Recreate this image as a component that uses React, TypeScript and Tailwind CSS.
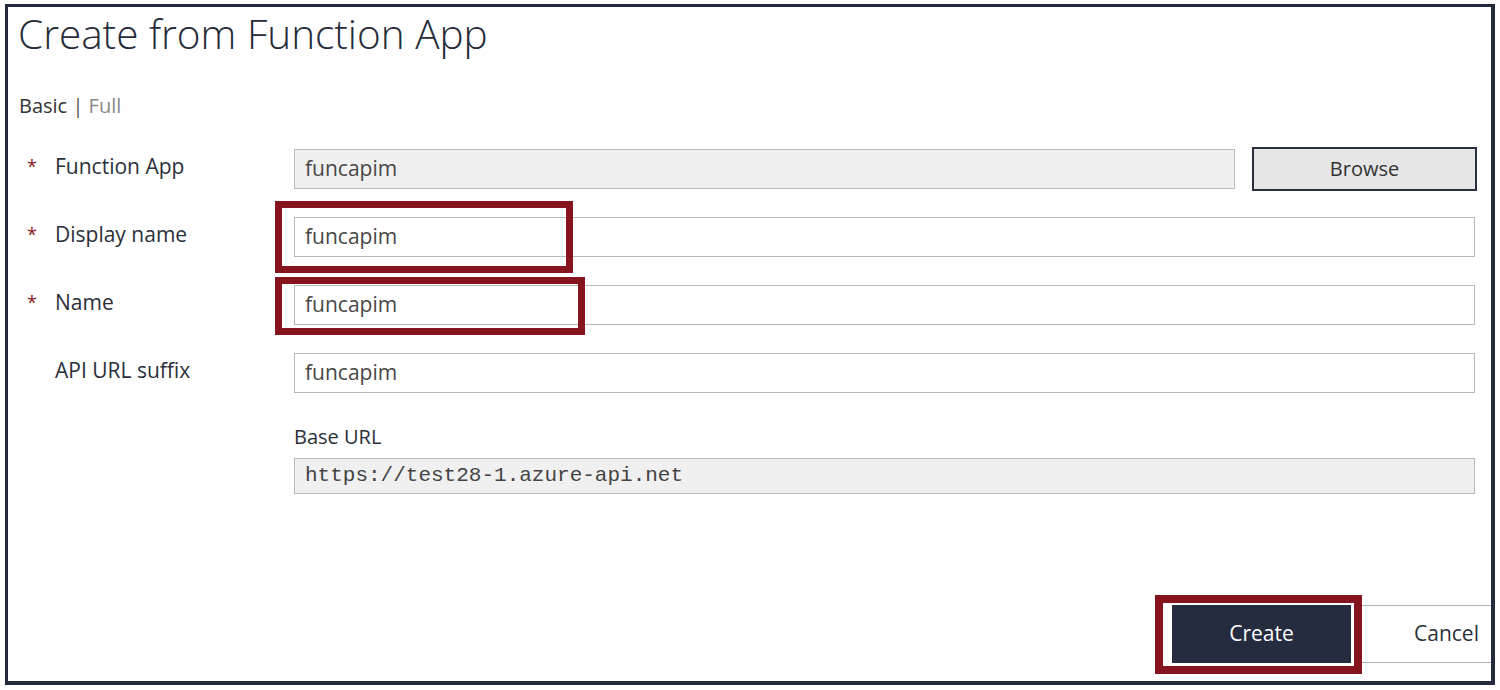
const font = { fontFamily: '"Open Sans", "Noto Sans", sans-serif' };

function Star({ show }: { show: boolean }) {
  return (
    <span className="inline-block w-[47px] shrink-0 pl-[19px] text-[18px] text-[#8a1620]">{show ? '*' : ''}</span>
  );
}

function RedBox({ className }: { className: string }) {
  return <div className={`pointer-events-none absolute border-[#85141f] ${className}`} />;
}

function Row({
  label,
  required,
  children,
}: {
  label: string;
  required?: boolean;
  children: React.ReactNode;
}) {
  return (
    <div className="flex items-start">
      <div className="flex w-[286px] shrink-0 items-center pt-[2px] text-[21px] leading-[30px] text-[#2b2f3a]">
        <Star show={!!required} />
        <span>{label}</span>
      </div>
      {children}
    </div>
  );
}

function TextBox({ value, className = '' }: { value: string; className?: string }) {
  return (
    <div
      className={`flex h-[40px] items-center border border-[#b9b9b9] pl-[10px] text-[21px] text-[#474747] ${className}`}
    >
      {value}
    </div>
  );
}

export default function App() {
  return (
    <div className="bg-white" style={font}>
      <div className="ml-[5px] mt-[4px] flex h-[681px] w-[1490px] flex-col border-t-[3px] border-l-[3px] border-r-4 border-b-4 border-[#232a3d] bg-white">
        <h1 className="pl-[10px] pt-[1px] text-[40.5px] font-light leading-[52px] text-[#262b38]">
          Create from Function App
        </h1>
        <div className="mt-[33px] pl-[11px] text-[20px] leading-[26px] text-[#333]">
          Basic <span className="text-[#555]">|</span> <span className="text-[#8a8a8a]">Full</span>
        </div>

        <div className="mt-[30px] flex flex-col gap-[28px]">
          <Row label="Function App" required>
            <div className="flex h-[40px] items-center">
              <TextBox value="funcapim" className="w-[941px] bg-[#f0f0f0]" />
              <button className="ml-[17px] h-[44px] w-[225px] border-2 border-[#2b3040] bg-[#e6e6e6] text-[20px] text-[#333]">
                Browse
              </button>
            </div>
          </Row>
          <Row label="Display name" required>
            <div className="relative">
              <TextBox value="funcapim" className="w-[1181px] bg-white" />
              <RedBox className="-left-[19px] -top-[16px] h-[72px] w-[298px] border-[7px]" />
            </div>
          </Row>
          <Row label="Name" required>
            <div className="relative">
              <TextBox value="funcapim" className="w-[1181px] bg-white" />
              <RedBox className="-left-[19px] -top-[8px] h-[58px] w-[310px] border-[7px]" />
            </div>
          </Row>
          <Row label="API URL suffix">
            <TextBox value="funcapim" className="w-[1181px] bg-white" />
          </Row>
        </div>

        <div className="ml-[286px] mt-[30px] text-[20px] leading-[28px] text-[#2b2f3a]">Base URL</div>
        <div
          className="ml-[286px] mt-[7px] flex h-[36px] w-[1181px] items-center border border-[#b9b9b9] bg-[#f0f0f0] pl-[10px] text-[21px] text-[#444]"
          style={{ fontFamily: '"Liberation Mono", monospace' }}
        >
          https://test28-1.azure-api.net
        </div>

        <div className="mt-auto mb-[18px] flex justify-end">
          <div className="relative">
            <button className="h-[58px] w-[179px] bg-[#252c3f] text-[21px] text-white">Create</button>
            <RedBox className="-left-[17px] -top-[10px] h-[79px] w-[207px] border-[8px]" />
          </div>
          <div className="ml-[11px] flex h-[58px] w-[129px] items-center border-y border-[#b0b0b0] pl-[52px] text-[21px] text-[#2b2f3a]">
            Cancel
          </div>
        </div>
      </div>
    </div>
  );
}
